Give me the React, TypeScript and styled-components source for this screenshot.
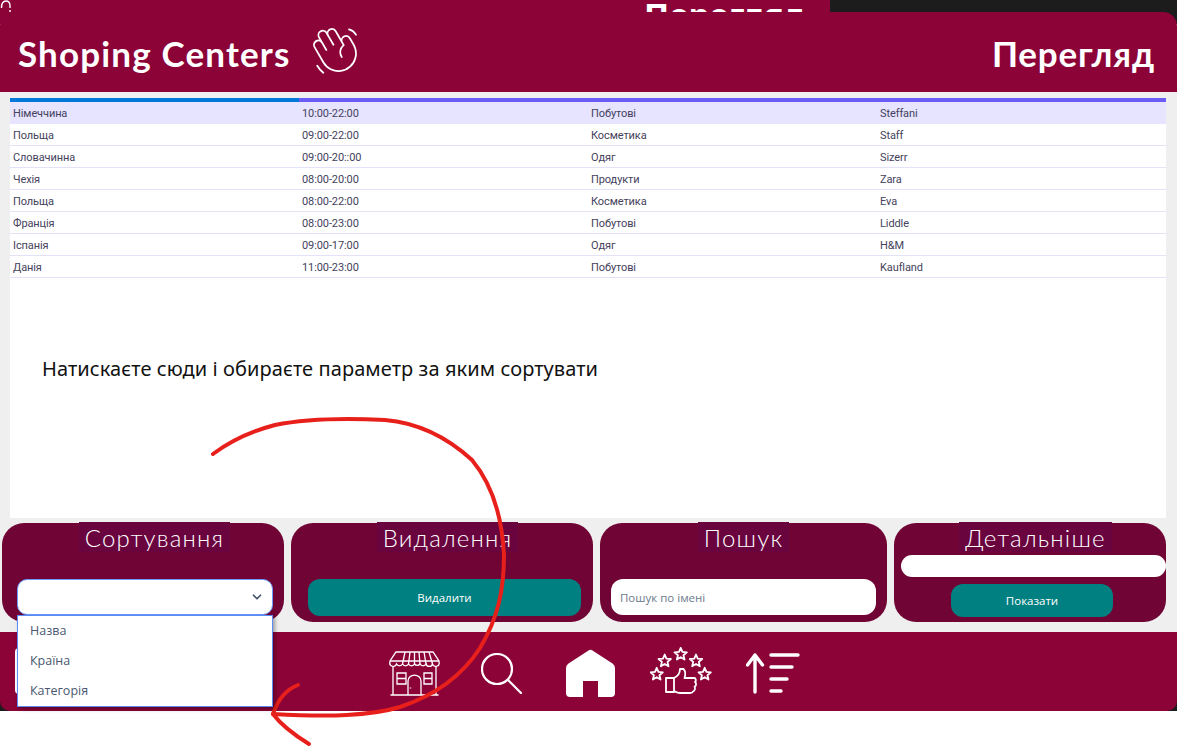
import styled, { createGlobalStyle } from "styled-components";
import { ChevronDown } from "lucide-react";
import { PiHandWavingThin } from "react-icons/pi";

const rows = [
  ["Німеччина", "10:00-22:00", "Побутові", "Steffani"],
  ["Польща", "09:00-22:00", "Косметика", "Staff"],
  ["Словачинна", "09:00-20::00", "Одяг", "Sizerr"],
  ["Чехія", "08:00-20:00", "Продукти", "Zara"],
  ["Польща", "08:00-22:00", "Косметика", "Eva"],
  ["Франція", "08:00-23:00", "Побутові", "Liddle"],
  ["Іспанія", "09:00-17:00", "Одяг", "H&M"],
  ["Данія", "11:00-23:00", "Побутові", "Kaufland"],
];

const stars = [
  [30.7, 7.3],
  [14.7, 14],
  [46, 14],
  [6.7, 27.3],
  [54.7, 27.3],
];

const starPoints = (cx: number, cy: number, r: number) => {
  const pts: string[] = [];
  for (let i = 0; i < 10; i++) {
    const rad = i % 2 === 0 ? r : r * 0.45;
    const a = -Math.PI / 2 + (i * Math.PI) / 5;
    pts.push(`${(cx + rad * Math.cos(a)).toFixed(2)},${(cy + rad * Math.sin(a)).toFixed(2)}`);
  }
  return pts.join(" ");
};

const CornerGlyph = () => (
  <svg width="12" height="12" viewBox="0 0 12 12" fill="none" stroke="#fff" strokeWidth="1.400">
    <path d="M1.500 8C1.500 3.500 3.500 1 6 1C8.500 1 10 3 10 6V8M10 10V12" />
  </svg>
);

const StoreIcon = () => (
  <svg width="51" height="45" viewBox="0 0 51 45" fill="none" stroke="#fff" strokeWidth="1.3">
    <path d="M7 1H44L50 10V11A3.4 3.4 0 0 1 43.500 13A3.400 3.400 0 0 1 37 13A3.400 3.400 0 0 1 31 13A3.400 3.400 0 0 1 25.500 13A3.400 3.400 0 0 1 19.500 13A3.400 3.400 0 0 1 13.500 13A3.400 3.400 0 0 1 7.500 13A3.400 3.400 0 0 1 1 11V10Z" />
    <path d="M13.500 13L16 1M19.500 13L21 1M25.500 13V1M31 13L30 1M37 13L35 1M43.500 13L40 1M1 10H50" />
    <path d="M4 15V44M47 15V44M1.500 44H49.500" />
    <path d="M8 22H17V33H8ZM8 27.500H17M35 22H43V33H35ZM35 27.500H43" />
    <path d="M19 44V30A6 5.500 0 0 1 32 30V44" />
    <path d="M21.500 36.500V37.500" strokeWidth="1.500" />
  </svg>
);

const SearchIcon = () => (
  <svg width="42" height="41" viewBox="0 0 42 41" fill="none" stroke="#fff" strokeWidth="2.200" strokeLinecap="round">
    <circle cx="16" cy="16" r="15" />
    <path d="M27 27L40 40" />
  </svg>
);

const HomeIcon = () => (
  <svg width="49" height="49" viewBox="0 0 49 49" fill="#fff">
    <path d="M22.500 1.500Q24.500 0 26.500 1.500L46.500 14.500Q49 16 49 19V44Q49 48 45 48H32V32H17V48H4Q0 48 0 44V19Q0 16 2.500 14.500Z" />
  </svg>
);

const RatingIcon = () => (
  <svg width="62" height="49" viewBox="0 0 62 49" fill="none" stroke="#fff" strokeWidth="1.800" strokeLinejoin="round">
    {stars.map(([x, y]) => (
      <polygon key={`${x}-${y}`} points={starPoints(x, y, 6.5)} />
    ))}
    <path d="M16 31H24V45H16Z" />
    <path d="M24 31C28 29 30 26 30 22H33.500C35.500 24 35.500 28 34.500 31H44C46 31 46.500 34 45 35C46.500 36 46.500 39 44.500 39.500C45.500 41 45 44 43 44.500C42.500 46 41.500 46 40 46H30C27 46 26 45 24 44" />
  </svg>
);

const SortIcon = () => (
  <svg width="54" height="41" viewBox="0 0 54 41" fill="none" stroke="#fff" strokeWidth="3.400" strokeLinecap="round" strokeLinejoin="round">
    <path d="M9 39V2M1.500 12L9 2L16.500 12" />
    <path d="M25 2H52M25 14H46M25 26H41M25 38H35" />
  </svg>
);

const App = () => {
  return (
    <Page>
      <GlobalStyle />
      <BackStrip>
        <BackWindow>
          <CornerGlyph />
          <BackTitle>Перегляд</BackTitle>
        </BackWindow>
      </BackStrip>

      <Window>
        <Header>
          <Brand>
            <HeaderTitle $spacing={1.15}>Shoping Centers</HeaderTitle>
            <WaveIcon>
              <PiHandWavingThin size={56} color="#fff" />
            </WaveIcon>
          </Brand>
          <HeaderTitle $spacing={0.85}>Перегляд</HeaderTitle>
        </Header>

        <Body>
          <TablePanel>
            <TableStrip>
              <StripCell $active />
              <StripCell />
              <StripCell />
              <StripCell />
            </TableStrip>
            {rows.map((row, i) => (
              <Row key={i} $selected={i === 0}>
                {row.map((cell) => (
                  <Cell key={cell}>{cell}</Cell>
                ))}
              </Row>
            ))}
            <Note>Натискаєте сюди і обираєте параметр за яким сортувати</Note>
          </TablePanel>

          <Cards>
            <Card>
              <CardTitle $shift={23}>Сортування</CardTitle>
              <SelectWrap>
                <SelectBox>
                  <ChevronDown size={14} strokeWidth={3} color="#46536a" />
                </SelectBox>
                <Dropdown>
                  <DropdownItem>Назва</DropdownItem>
                  <DropdownItem>Країна</DropdownItem>
                  <DropdownItem>Категорія</DropdownItem>
                </Dropdown>
              </SelectWrap>
            </Card>
            <Card>
              <CardTitle $shift={11}>Видалення</CardTitle>
              <DeleteButton>Видалити</DeleteButton>
            </Card>
            <Card>
              <CardTitle $shift={0}>Пошук</CardTitle>
              <SearchInput placeholder="Пошук по імені" />
            </Card>
            <Card>
              <CardTitle $shift={11}>Детальніше</CardTitle>
              <DetailsInput />
              <ShowButton>Показати</ShowButton>
            </Card>
          </Cards>
        </Body>

        <FooterBack>
          <Footer>
            <BackButton />
            <FooterIcons>
              <IconSlot $gap={0} $lift={0}>
                <StoreIcon />
              </IconSlot>
              <IconSlot $gap={41} $lift={0}>
                <SearchIcon />
              </IconSlot>
              <IconSlot $gap={43} $lift={0}>
                <HomeIcon />
              </IconSlot>
              <IconSlot $gap={35} $lift={3}>
                <RatingIcon />
              </IconSlot>
              <IconSlot $gap={34} $lift={0}>
                <SortIcon />
              </IconSlot>
            </FooterIcons>
          </Footer>
        </FooterBack>
      </Window>

      <Scribble width="1177" height="747" viewBox="0 0 1177 747" fill="none">
        <path
          d="M213 454C232 440 252 431 275 425C305 419 345 418 385 420C420 423 448 438 472 460C492 484 502 515 504 555C504 590 498 618 480 648C462 676 436 695 400 707C370 716 330 717 273 714"
          stroke="#e8201c"
          strokeWidth="4"
          strokeLinecap="round"
        />
        <path
          d="M298 685C285 690 277 702 273 714C282 726 296 736 309 744"
          stroke="#e8201c"
          strokeWidth="4"
          strokeLinecap="round"
        />
      </Scribble>
    </Page>
  );
};

export default App;

const GlobalStyle = createGlobalStyle`
  html, body {
    margin: 0;
    padding: 0;
    background: #fff;
    overflow: hidden;
  }
  * {
    box-sizing: border-box;
  }
`;

const Page = styled.div`
  position: relative;
  width: 1177px;
  height: 747px;
  background: #fff;
  font-family: "Open Sans", "Noto Sans", sans-serif;
`;

const BackStrip = styled.div`
  height: 24px;
  background: #1c1c1c;
`;

const BackWindow = styled.div`
  display: flex;
  align-items: flex-start;
  width: 830px;
  height: 24px;
  background: #8c0338;
  overflow: hidden;
`;

const BackTitle = styled.div`
  margin: -2px 0 0 632px;
  font-family: "Noto Sans", sans-serif;
  font-size: 33px;
  font-weight: 700;
  line-height: 1;
  color: #fff;
  white-space: nowrap;
`;

const Window = styled.div`
  position: relative;
  margin-top: -12px;
`;

const Header = styled.header`
  height: 80px;
  background: #8c0338;
  border-radius: 14px 14px 0 0;
  display: flex;
  align-items: center;
  justify-content: space-between;
  padding: 2px 22px 0 18px;
`;

const Brand = styled.div`
  display: flex;
  align-items: center;
  gap: 17px;
`;

const WaveIcon = styled.span`
  display: flex;
  margin-top: -7px;
`;

const HeaderTitle = styled.h1<{ $spacing: number }>`
  margin: 0;
  font-family: "Lato", "Noto Sans", sans-serif;
  font-size: 35px;
  font-weight: 700;
  color: #fff;
  letter-spacing: ${(props) => props.$spacing}px;
`;

const Body = styled.main`
  background: #efefef;
  height: 540px;
  padding-top: 6px;
`;

const TablePanel = styled.section`
  margin: 0 11px 0 10px;
  height: 420px;
  background: #fff;
`;

const TableStrip = styled.div`
  display: grid;
  grid-template-columns: repeat(4, 289px);
  height: 4px;
`;

const StripCell = styled.div<{ $active?: boolean }>`
  background: ${(props) => (props.$active ? "#0078d7" : "#6c5cf7")};
`;

const Row = styled.div<{ $selected?: boolean }>`
  display: grid;
  grid-template-columns: repeat(4, 289px);
  align-items: center;
  height: 22px;
  background: ${(props) => (props.$selected ? "#e6e4ff" : "#fff")};
  border-bottom: 1px solid ${(props) => (props.$selected ? "#e6e4ff" : "#e4e2f8")};
`;

const Cell = styled.div`
  padding: 1px 0 0 3px;
  font-family: "Roboto", sans-serif;
  font-size: 11px;
  letter-spacing: -0.1px;
  color: #44425c;
`;

const Note = styled.p`
  margin: 78px 0 0 32px;
  font-family: "Noto Sans", sans-serif;
  font-size: 20px;
  letter-spacing: 0.08px;
  line-height: 26px;
  color: #111;
`;

const Cards = styled.div`
  display: grid;
  grid-template-columns: 282px 302px 287px 272px;
  gap: 7px;
  height: 99px;
  margin: 5px 0 0 2px;
`;

const Card = styled.div`
  display: flex;
  flex-direction: column;
  background: #700434;
  border-radius: 22px;
`;

const CardTitle = styled.div<{ $shift: number }>`
  align-self: center;
  margin: -1px 0 0 ${(props) => props.$shift}px;
  height: 30px;
  padding: 0 6px;
  background: #6a043f;
  font-family: "Lato", "Noto Sans", sans-serif;
  font-size: 24px;
  font-weight: 300;
  letter-spacing: 1.2px;
  line-height: 32px;
  color: #fff;
`;

const SelectWrap = styled.div`
  position: relative;
  z-index: 2;
  margin: 27px 11px 0 15px;
`;

const SelectBox = styled.div`
  display: flex;
  align-items: center;
  justify-content: flex-end;
  height: 36px;
  padding-right: 8px;
  background: #fff;
  border: 1px solid #6b9bff;
  border-radius: 10px;
`;

const Dropdown = styled.ul`
  position: absolute;
  top: 36px;
  left: 0;
  right: 0;
  height: 92px;
  margin: 0;
  padding: 0;
  list-style: none;
  background: #fff;
  border: 1px solid #5b8cf5;
  box-shadow: 2px 2px 4px rgba(0, 0, 0, 0.35);
`;

const DropdownItem = styled.li`
  height: 30px;
  padding-left: 12px;
  font-size: 12.5px;
  line-height: 29px;
  color: #4b5870;
`;

const DeleteButton = styled.button`
  height: 37px;
  margin: 27px 12px 0 17px;
  background: #008080;
  border: none;
  border-radius: 12px;
  font-family: "Open Sans", sans-serif;
  font-size: 11.5px;
  font-weight: 500;
  color: #fff;
`;

const SearchInput = styled.input`
  height: 36px;
  margin: 27px 11px 0;
  padding: 0 9px;
  background: #fff;
  border: none;
  border-radius: 12px;
  font-family: "Open Sans", sans-serif;
  font-size: 11.5px;

  &::placeholder {
    color: #6c7a8c;
    opacity: 1;
  }
`;

const DetailsInput = styled.input`
  height: 22px;
  margin: 3px 0 0 7px;
  background: #fff;
  border: none;
  border-radius: 11px;
`;

const ShowButton = styled(DeleteButton)`
  width: 162px;
  height: 33px;
  margin: 7px 0 0 57px;
`;

const FooterBack = styled.div`
  background: #1c1c1c;
`;

const Footer = styled.footer`
  position: relative;
  display: flex;
  height: 79px;
  padding: 16px 0 0 15px;
  background: #8c0338;
  border-radius: 0 0 10px 10px;
`;

const BackButton = styled.div`
  width: 40px;
  height: 46px;
  background: #fff;
  border-radius: 4px;
`;

const FooterIcons = styled.nav`
  display: flex;
  align-items: center;
  height: 50px;
  margin-left: 334px;
`;

const IconSlot = styled.span<{ $gap: number; $lift: number }>`
  display: flex;
  margin-left: ${(props) => props.$gap}px;
  margin-top: ${(props) => -props.$lift}px;
`;

const Scribble = styled.svg`
  position: absolute;
  top: 0;
  left: 0;
  pointer-events: none;
`;
